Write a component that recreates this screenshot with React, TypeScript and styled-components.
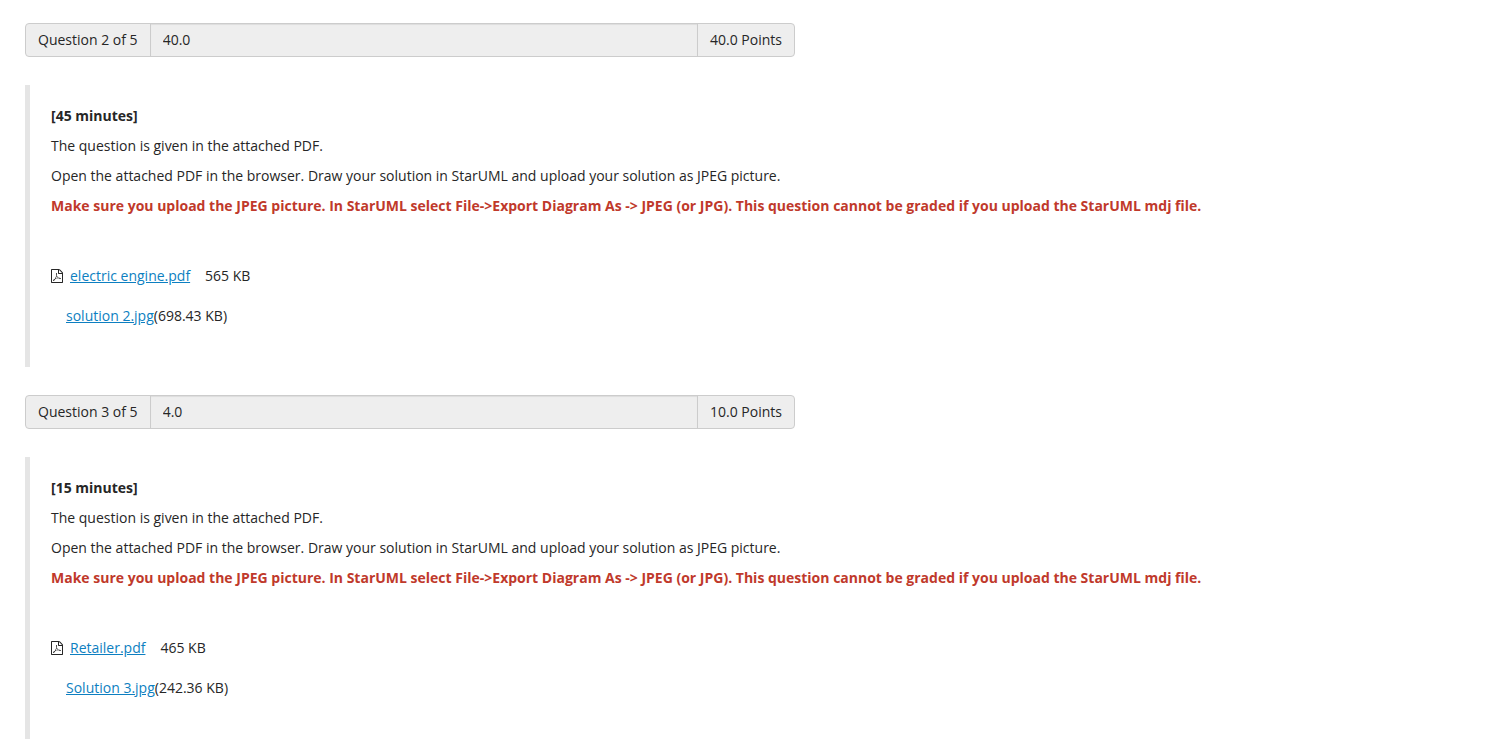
import React from "react";
import styled, { createGlobalStyle } from "styled-components";

const GlobalStyle = createGlobalStyle`
  * { box-sizing: border-box; }
  body {
    margin: 0;
    background: #fff;
    color: #262626;
    font: 14px/20px "Open Sans", sans-serif;
  }
`;

const Page = styled.main`
  padding: 23px 25px 15px;
  display: flex;
  flex-direction: column;
  gap: 28px;
`;

const Question = styled.section`
  display: flex;
  flex-direction: column;
  gap: 28px;
`;

const ScoreBar = styled.div`
  display: flex;
  width: 100%;
  max-width: 770px;
  height: 34px;
  border: 1px solid #ccc;
  border-radius: 4px;
  background: #eee;
  overflow: hidden;
`;

const Addon = styled.label`
  flex: none;
  padding: 6px 12px;
`;

const ScoreInput = styled.input`
  flex: 1;
  min-width: 0;
  padding: 6px 12px;
  border: solid #ccc;
  border-width: 0 1px;
  background: #eee;
  box-shadow: inset 0 1px 1px rgba(0, 0, 0, 0.075);
  color: inherit;
  font: inherit;
`;

const Body = styled.div`
  padding: 21px;
  border-left: 5px solid #e5e5e5;
`;

const Line = styled.p<{ $strong?: boolean; $warning?: boolean }>`
  margin: 0 0 10px;
  font-weight: ${(p) => (p.$strong || p.$warning ? 700 : 400)};
  color: ${(p) => (p.$warning ? "#c0392b" : "inherit")};
`;

const Attachment = styled.div`
  display: flex;
  align-items: center;
  margin-top: 50px;
`;

const FileLink = styled.a`
  color: #0d7fc1;
  text-decoration: underline;
`;

const IconSvg = styled.svg`
  width: 12px;
  height: 14px;
  margin-right: 7px;
  fill: #262626;
`;

const PdfIcon = () => (
  <IconSvg viewBox="0 0 1536 1792" aria-hidden="true">
    <path
      fillRule="evenodd"
      d="M1468 380q28 28 48 76t20 88v1152q0 40-28 68t-68 28h-1344q-40 0-68-28t-28-68v-1600q0-40 28-68t68-28h896q40 0 88 20t76 48zM1024 136v376h376q-10-29-22-41l-313-313q-12-12-41-22zM1408 1664v-1024h-416q-40 0-68-28t-28-68v-416h-768v1536h1280z"
    />
    <path d="M894 1071q33 26 84 56 59-7 117-7 147 0 177 49 16 22 2 52 0 1-1 2l-2 2v1q-6 38-71 38-48 0-115-20t-130-53q-221 24-392 83-153 262-242 262-15 0-28-7l-24-12q-1-1-6-5-10-10-6-36 9-40 56-91.500t132-96.500q14-9 23 6 2 2 2 4 52-85 107-197 68-136 104-262-24-82-30.500-159.500t6.500-127.500q11-40 42-40h22q23 0 35 15 18 21 9 68-2 6-4 8 1 3 1 8v30q-2 123-14 192 55 164 146 238zM592 1223q135-54 284-81-2-1-13-9.500t-16-13.500q-76-67-127-176-27 86-83 197-30 56-45 83z" fillRule="evenodd" />
  </IconSvg>
);

const Size = styled.span`
  margin-left: 15px;
`;

const Submission = styled.div`
  margin: 20px 0 20px 15px;
`;

interface Item {
  number: number;
  score: string;
  points: string;
  minutes: number;
  pdf: string;
  pdfSize: string;
  answer: string;
  answerSize: string;
}

const items: Item[] = [
  { number: 2, score: "40.0", points: "40.0", minutes: 45, pdf: "electric engine.pdf", pdfSize: "565 KB", answer: "solution 2.jpg", answerSize: "698.43 KB" },
  { number: 3, score: "4.0", points: "10.0", minutes: 15, pdf: "Retailer.pdf", pdfSize: "465 KB", answer: "Solution 3.jpg", answerSize: "242.36 KB" },
];

export default function App() {
  return (
    <>
      <GlobalStyle />
      <Page>
        {items.map((q) => (
          <Question key={q.number}>
            <ScoreBar>
              <Addon htmlFor={`score-${q.number}`}>Question {q.number} of 5</Addon>
              <ScoreInput id={`score-${q.number}`} type="text" value={q.score} readOnly />
              <Addon as="span">{q.points} Points</Addon>
            </ScoreBar>
            <Body>
              <Line $strong>[{q.minutes} minutes]</Line>
              <Line>The question is given in the attached PDF.</Line>
              <Line>Open the attached PDF in the browser. Draw your solution in StarUML and upload your solution as JPEG picture.</Line>
              <Line $warning>
                Make sure you upload the JPEG picture. In StarUML select File-&gt;Export Diagram As -&gt; JPEG (or JPG). This question cannot be graded if you upload the StarUML mdj file.
              </Line>
              <Attachment>
                <PdfIcon />
                <FileLink href="#">{q.pdf}</FileLink>
                <Size>{q.pdfSize}</Size>
              </Attachment>
              <Submission>
                <FileLink href="#">{q.answer}</FileLink>({q.answerSize})
              </Submission>
            </Body>
          </Question>
        ))}
      </Page>
    </>
  );
}
